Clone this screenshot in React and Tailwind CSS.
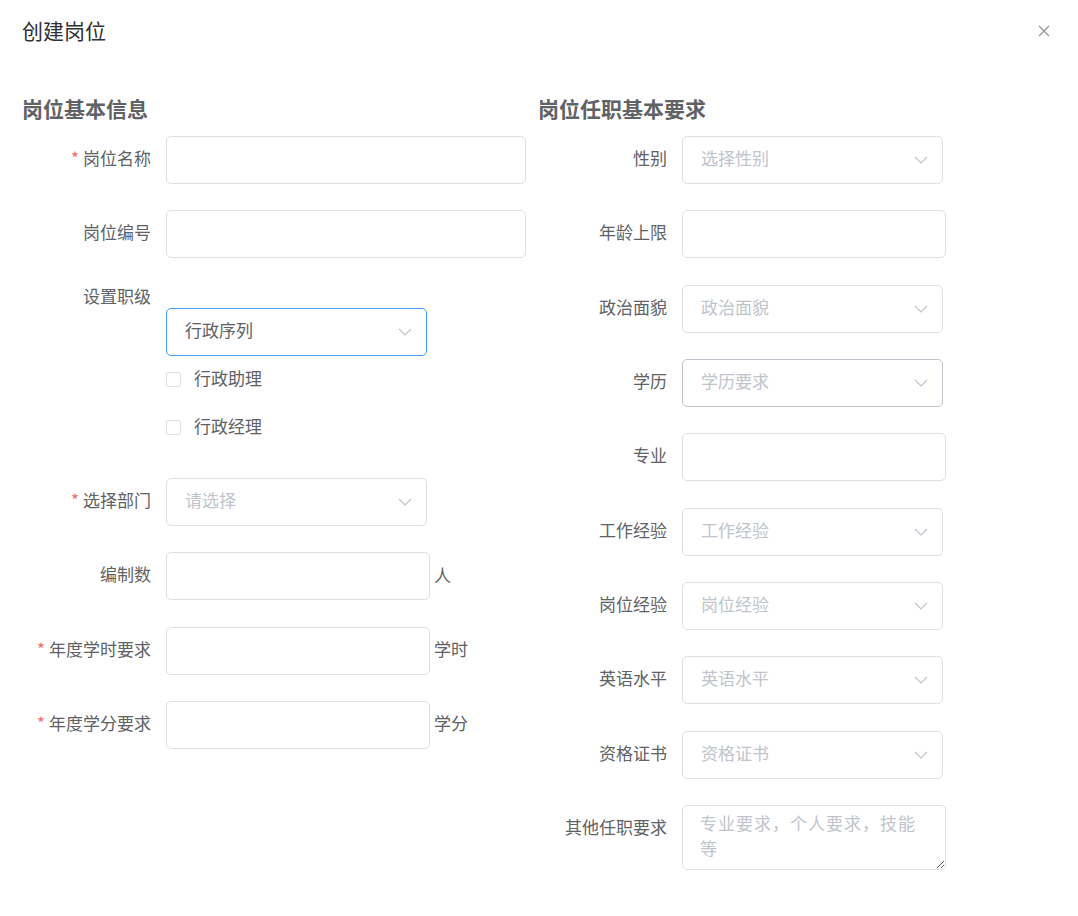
import React from "react";

const FONT = { fontFamily: '"Noto Sans CJK SC", "Noto Sans", sans-serif' };

function Chevron() {
  return (
    <svg width="14" height="8" viewBox="0 0 14 8" className="shrink-0">
      <polyline points="1,1 7,7 13,1" fill="none" stroke="#c0c4cc" strokeWidth="1.2" />
    </svg>
  );
}

function Label({ children, required, top }) {
  return (
    <div
      className={
        "w-[130px] shrink-0 pr-[1px] text-right text-[17px] text-[#606266] " +
        (top ? "h-[24px] leading-[22px]" : "h-[48px] leading-[44px]")
      }
    >
      {required && <span className="text-[#f56c6c] mr-[4px]">*</span>}
      {children}
    </div>
  );
}

function Input({ w }) {
  return <div className={"h-[48px] rounded-[5px] border border-[#dcdfe6] bg-white " + w}></div>;
}

function Select({ text, placeholder = true, hover, focus }) {
  return (
    <div
      className={
        "h-[48px] w-[261px] rounded-[5px] border flex items-center justify-between pl-[18px] pr-[14px] bg-white " +
        (focus ? "border-[#409eff]" : hover ? "border-[#c0c4cc]" : "border-[#dcdfe6]")
      }
    >
      <span className={"text-[17px] leading-[24px] pb-[4px] " + (placeholder ? "text-[#c0c4cc]" : "text-[#606266]")}>{text}</span>
      <Chevron />
    </div>
  );
}

function Row({ label, required, children }) {
  return (
    <div className="flex items-start">
      <Label required={required}>{label}</Label>
      <div className="ml-[14px] flex items-center">{children}</div>
    </div>
  );
}

function Checkbox({ text }) {
  return (
    <div className="h-[48px] flex items-center">
      <div className="w-[15px] h-[15px] rounded-[2px] border border-[#dcdfe6] bg-white"></div>
      <span className="ml-[13px] text-[17px] leading-[24px] pb-[4px] text-[#606266]">{text}</span>
    </div>
  );
}

function Unit({ children }) {
  return <span className="ml-[4px] text-[17px] leading-[24px] pb-[3px] text-[#606266]">{children}</span>;
}

export default function App() {
  return (
    <div className="w-[1078px] h-[916px] bg-white relative overflow-hidden" style={FONT}>
      <div className="flex items-center justify-between pl-[22px] pr-[28px] pt-[20px] h-[44px]">
        <div className="text-[21px] leading-[20px] pb-[4px] text-[#303133]">创建岗位</div>
        <svg width="12" height="12" viewBox="0 0 12 12" className="mb-[2px]">
          <path d="M1 1 L11 11 M11 1 L1 11" stroke="#909399" strokeWidth="1.2" fill="none" />
        </svg>
      </div>

      <div className="flex pl-[22px] mt-[54px]">
        {/* Left column */}
        <div className="w-[516px] shrink-0">
          <div className="h-[24px] leading-[20px] text-[21px] font-bold text-[#606266] mb-[14px]">岗位基本信息</div>
          <div className="flex flex-col gap-[26.33px]">
            <Row label="岗位名称" required>
              <Input w="w-[360px]" />
            </Row>
            <Row label="岗位编号">
              <Input w="w-[360px]" />
            </Row>
            <div className="flex items-start">
              <Label top>设置职级</Label>
              <div className="ml-[14px] pt-[23px] flex flex-col">
                <Select text="行政序列" placeholder={false} focus />
                <Checkbox text="行政助理" />
                <Checkbox text="行政经理" />
              </div>
            </div>
            <Row label="选择部门" required>
              <Select text="请选择" />
            </Row>
            <Row label="编制数">
              <Input w="w-[264px]" />
              <Unit>人</Unit>
            </Row>
            <Row label="年度学时要求" required>
              <Input w="w-[264px]" />
              <Unit>学时</Unit>
            </Row>
            <Row label="年度学分要求" required>
              <Input w="w-[264px]" />
              <Unit>学分</Unit>
            </Row>
          </div>
        </div>

        {/* Right column */}
        <div className="w-[516px] shrink-0">
          <div className="h-[24px] leading-[20px] text-[21px] font-bold text-[#606266] mb-[14px]">岗位任职基本要求</div>
          <div className="flex flex-col gap-[26.33px]">
            <Row label="性别">
              <Select text="选择性别" />
            </Row>
            <Row label="年龄上限">
              <Input w="w-[264px]" />
            </Row>
            <Row label="政治面貌">
              <Select text="政治面貌" />
            </Row>
            <Row label="学历">
              <Select text="学历要求" hover />
            </Row>
            <Row label="专业">
              <Input w="w-[264px]" />
            </Row>
            <Row label="工作经验">
              <Select text="工作经验" />
            </Row>
            <Row label="岗位经验">
              <Select text="岗位经验" />
            </Row>
            <Row label="英语水平">
              <Select text="英语水平" />
            </Row>
            <Row label="资格证书">
              <Select text="资格证书" />
            </Row>
            <div className="flex items-start">
              <Label>其他任职要求</Label>
              <textarea
                className="ml-[14px] w-[264px] h-[65px] rounded-[5px] border border-[#dcdfe6] px-[17px] pt-[4px] text-[17px] leading-[25px] tracking-[1px] text-[#606266] placeholder:text-[#c0c4cc] outline-none resize-y"
                placeholder="专业要求，个人要求，技能等"
                style={FONT}
              ></textarea>
            </div>
          </div>
        </div>
      </div>
    </div>
  );
}
